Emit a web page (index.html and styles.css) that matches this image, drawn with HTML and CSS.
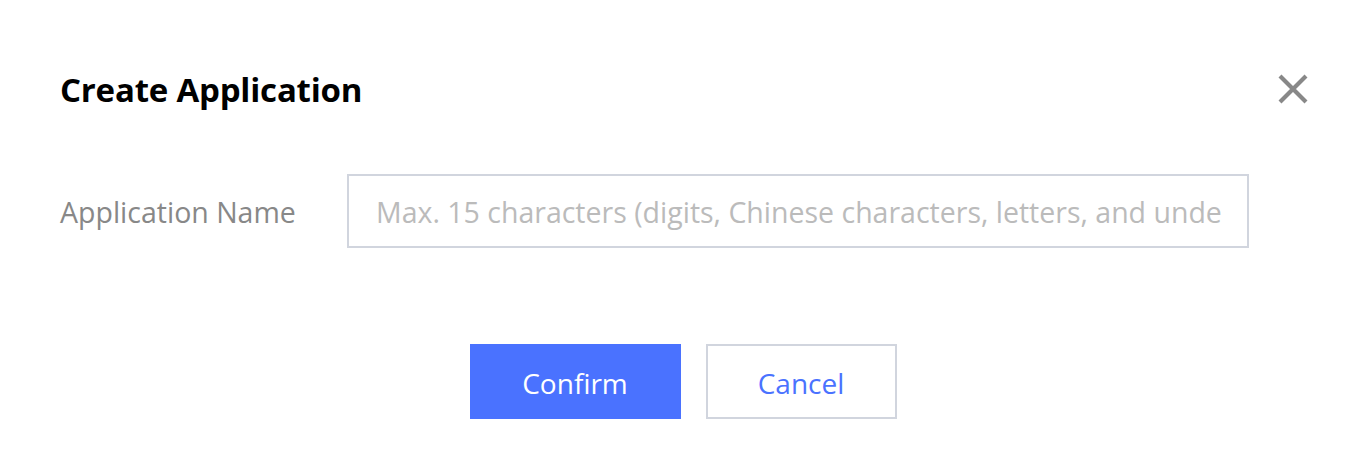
FILE: index.html
```html
<!DOCTYPE html>
<html>
<head>
<meta charset="utf-8">
<link rel="stylesheet" href="styles.css">
</head>
<body>
<div class="dialog">
  <div class="dialog-header">
    <h2 class="dialog-title">Create Application</h2>
    <button class="close-btn" aria-label="Close">
      <svg width="30" height="30" viewBox="0 0 30 30"><path d="M2 2 L28 28 M28 2 L2 28" stroke="#888" stroke-width="4.2" fill="none"/></svg>
    </button>
  </div>
  <div class="form-row">
    <label class="form-label">Application Name</label>
    <input class="form-input" type="text" placeholder="Max. 15 characters (digits, Chinese characters, letters, and underscores)">
  </div>
  <div class="dialog-footer">
    <button class="btn btn-primary">Confirm</button>
    <button class="btn btn-default">Cancel</button>
  </div>
</div>
</body>
</html>
```
FILE: styles.css
```css
html, body {
  margin: 0;
  padding: 0;
  background: #fff;
}
body {
  font-family: "Open Sans", "Noto Sans", "Liberation Sans", sans-serif;
}
.dialog {
  padding: 59px 57px 0 60px;
}
.dialog-header {
  display: flex;
  justify-content: space-between;
  align-items: center;
  height: 60px;
}
.dialog-title {
  margin: 0;
  font-size: 33px;
  font-weight: 700;
  color: #000;
  letter-spacing: -0.2px;
}
.close-btn {
  border: 0;
  background: none;
  padding: 0;
  width: 30px;
  height: 30px;
  display: flex;
  cursor: pointer;
  margin-right: 1px;
}
.form-row {
  display: flex;
  align-items: center;
  margin-top: 55px;
  height: 74px;
}
.form-label {
  width: 287px;
  flex: none;
  font-size: 28.5px;
  color: #888;
  padding-top: 2px;
}
.form-input {
  width: 902px;
  height: 74px;
  box-sizing: border-box;
  border: 2px solid #d1d5de;
  padding: 2px 26px 0 27px;
  font-family: inherit;
  font-size: 28.5px;
  color: #333;
  outline: none;
  border-radius: 0;
}
.form-input::placeholder {
  color: #bbb;
}
.dialog-footer {
  display: flex;
  justify-content: center;
  gap: 25px;
  margin-top: 96px;
  padding-right: 3px;
}
.btn {
  height: 75px;
  box-sizing: border-box;
  font-family: inherit;
  font-size: 28px;
  border-radius: 0;
  cursor: pointer;
  padding: 3px 0 0;
}
.btn-primary {
  width: 211px;
  background: #4a72ff;
  border: 0;
  color: #fff;
}
.btn-default {
  width: 191px;
  background: #fff;
  border: 2px solid #d1d5de;
  color: #4a72ff;
}
```
